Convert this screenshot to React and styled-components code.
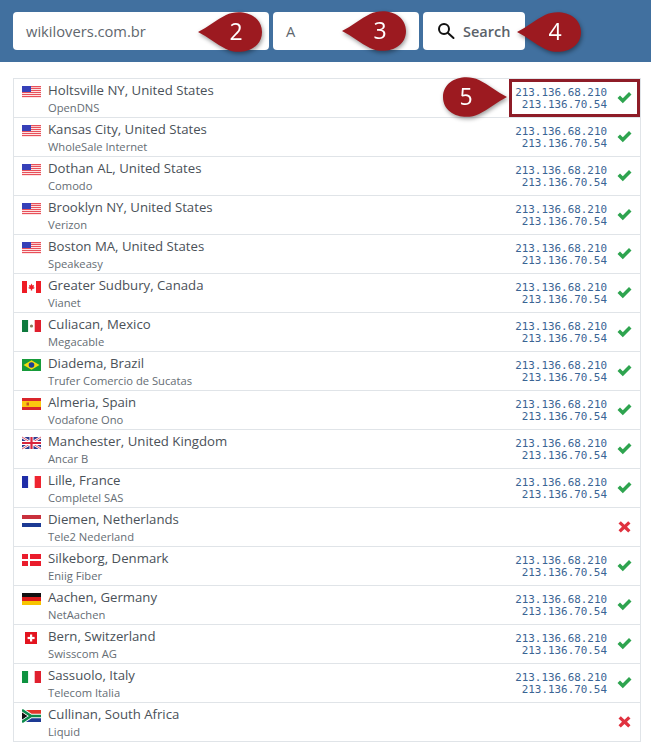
import React from 'react'
import styled, { createGlobalStyle } from 'styled-components'

const GlobalStyle = createGlobalStyle`
  html, body { margin: 0; padding: 0; background: #fff; }
  body { font-family: "Open Sans", "Noto Sans", sans-serif; overflow: hidden; }
`

const Page = styled.div`
  position: relative;
  width: 651px;
  height: 742px;
  overflow: hidden;
`

const Header = styled.div`
  display: flex;
  gap: 4px;
  height: 62px;
  box-sizing: border-box;
  padding: 12px 13px;
  background: #41709f;
`

const Field = styled.div`
  display: flex;
  align-items: center;
  box-sizing: border-box;
  width: ${p => p.$width}px;
  height: 38px;
  padding-left: 13px;
  background: #fff;
  border-radius: 4px;
  color: #5f676e;
  font-size: 14.7px;
`

const SearchButton = styled.div`
  display: flex;
  align-items: center;
  gap: 8px;
  box-sizing: border-box;
  width: 102px;
  height: 38px;
  padding-left: 14px;
  background: #fff;
  border-radius: 4px;
  color: #5b6269;
  font-size: 14.5px;
  font-weight: 600;
`

const List = styled.div`
  margin: 16px 10px 0 13px;
  border: 1px solid #e0e4e8;
  border-bottom: none;
`

const Row = styled.div`
  display: flex;
  align-items: center;
  box-sizing: border-box;
  height: 39px;
  padding: 0 8px 0 8px;
  border-bottom: 1px solid #e0e4e8;
`

const FlagBox = styled.svg`
  flex: none;
  width: 19px;
  height: 14px;
  margin-right: 7px;
  margin-top: -12px;
`

const Place = styled.div`
  flex: 1;
  min-width: 0;
`

const City = styled.div`
  color: #4a5158;
  font-size: 13.2px;
  line-height: 18px;
  margin-top: 1px;
`

const Isp = styled.div`
  color: #656d74;
  font-size: 11.2px;
  line-height: 17px;
`

const Ips = styled.div`
  color: #3a6494;
  font-family: "DejaVu Sans Mono", monospace;
  font-size: 10.9px;
  line-height: 12px;
  text-align: right;
  margin-right: 10px;
  margin-top: 1px;
`

const Status = styled.svg`
  flex: none;
  width: 15px;
  height: 13px;
  margin-top: -1px;
`

const Highlight = styled.div`
  position: absolute;
  left: 509px;
  top: 79px;
  width: 131px;
  height: 38px;
  box-sizing: border-box;
  border: 3px solid #8e1c27;
`

const Callout = styled.div`
  position: absolute;
  left: ${p => p.$x}px;
  top: ${p => p.$y}px;
  width: 64px;
  height: 42px;
  filter: drop-shadow(1px 2px 2px rgba(0, 0, 0, 0.4));
  svg { display: block; width: 64px; height: 42px; }
`

const CalloutNumber = styled.span`
  position: absolute;
  top: 0;
  ${p => (p.$flip ? 'left: 11px;' : 'right: 14px;')}
  width: 24px;
  line-height: 40px;
  text-align: center;
  color: #fff;
  font-family: "Open Sans", sans-serif;
  font-size: 23px;
`

const usStripes = [0, 2, 4, 6, 8, 10].map(y => <rect key={y} x="0" y={y + 1} width="19" height="1" fill="#e8505a" />)

const flags = {
  us: (
    <>
      <rect y="1" width="19" height="12" fill="#fde3e3" />
      {usStripes}
      <rect y="1" width="19" height="1.2" fill="#e8505a" />
      <rect y="1" width="9" height="6" fill="#3640b8" />
    </>
  ),
  ca: (
    <>
      <rect y="1" width="19" height="12" fill="#fff" />
      <rect y="1" width="5" height="12" fill="#ee1c25" />
      <rect x="14" y="1" width="5" height="12" fill="#ee1c25" />
      <path d="M9.5 3.5l1 2 1.5-.5-.5 2.500 1-.3-.3 1.300-2 .5V10.500h-1.400V9l-2-.5-.3-1.300 1 .3L7 5l1.500.5z" fill="#ee1c25" />
    </>
  ),
  mx: (
    <>
      <rect y="1" width="6.300" height="12" fill="#0e7a3e" />
      <rect x="6.300" y="1" width="6.400" height="12" fill="#fff" />
      <rect x="12.700" y="1" width="6.300" height="12" fill="#e01f2d" />
      <circle cx="9.500" cy="7" r="1.600" fill="#8a7a5a" />
    </>
  ),
  br: (
    <>
      <rect y="1" width="19" height="12" fill="#169b3a" />
      <path d="M9.500 2.200L17.500 7 9.500 11.800 1.500 7z" fill="#f5dd10" />
      <circle cx="9.500" cy="7" r="2.800" fill="#1f3f94" />
    </>
  ),
  es: (
    <>
      <rect y="1" width="19" height="12" fill="#d9252b" />
      <rect y="4" width="19" height="6" fill="#fbc70f" />
      <rect x="4.500" y="5.500" width="2.500" height="3" fill="#c9541f" />
    </>
  ),
  gb: (
    <>
      <rect y="1" width="19" height="12" fill="#2f3a8f" />
      <path d="M0 1l19 12M19 1L0 13" stroke="#fff" strokeWidth="2.400" />
      <path d="M0 1l19 12M19 1L0 13" stroke="#d8324a" strokeWidth=".8" />
      <path d="M9.500 1v12M0 7h19" stroke="#fff" strokeWidth="4" />
      <path d="M9.500 1v12M0 7h19" stroke="#d8243c" strokeWidth="2.200" />
    </>
  ),
  fr: (
    <>
      <rect y="1" width="6.300" height="12" fill="#1f2da8" />
      <rect x="6.300" y="1" width="6.400" height="12" fill="#fff" />
      <rect x="12.700" y="1" width="6.300" height="12" fill="#ee2430" />
    </>
  ),
  nl: (
    <>
      <rect y="1" width="19" height="4" fill="#c9303c" />
      <rect y="5" width="19" height="4" fill="#fff" />
      <rect y="9" width="19" height="4" fill="#1c3a94" />
    </>
  ),
  dk: (
    <>
      <rect y="1" width="19" height="12" fill="#ea1c2c" />
      <rect x="6" y="1" width="2" height="12" fill="#fff" />
      <rect y="6" width="19" height="2" fill="#fff" />
    </>
  ),
  de: (
    <>
      <rect y="1" width="19" height="4" fill="#111" />
      <rect y="5" width="19" height="4" fill="#dd1c1c" />
      <rect y="9" width="19" height="4" fill="#f7c400" />
    </>
  ),
  ch: (
    <>
      <rect x="3" y="1" width="12" height="12" fill="#e3141f" />
      <rect x="8" y="3.500" width="2.200" height="7" fill="#fff" />
      <rect x="5.600" y="5.900" width="7" height="2.200" fill="#fff" />
    </>
  ),
  it: (
    <>
      <rect y="1" width="6.300" height="12" fill="#0e9240" />
      <rect x="6.300" y="1" width="6.400" height="12" fill="#fff" />
      <rect x="12.700" y="1" width="6.300" height="12" fill="#e0202e" />
    </>
  ),
  za: (
    <>
      <rect y="1" width="19" height="6" fill="#e0352b" />
      <rect y="7" width="19" height="6" fill="#1d3a94" />
      <path d="M0 1l9 6-9 6M9 7h10" stroke="#fff" strokeWidth="4.400" fill="none" />
      <path d="M0 1l9 6-9 6M9 7h10" stroke="#0d8a4a" strokeWidth="2.600" fill="none" />
      <path d="M0 3.500L5.200 7 0 10.500z" fill="#111" />
    </>
  )
}

const rows = [
  ['us', 'Holtsville NY, United States', 'OpenDNS', true],
  ['us', 'Kansas City, United States', 'WholeSale Internet', true],
  ['us', 'Dothan AL, United States', 'Comodo', true],
  ['us', 'Brooklyn NY, United States', 'Verizon', true],
  ['us', 'Boston MA, United States', 'Speakeasy', true],
  ['ca', 'Greater Sudbury, Canada', 'Vianet', true],
  ['mx', 'Culiacan, Mexico', 'Megacable', true],
  ['br', 'Diadema, Brazil', 'Trufer Comercio de Sucatas', true],
  ['es', 'Almeria, Spain', 'Vodafone Ono', true],
  ['gb', 'Manchester, United Kingdom', 'Ancar B', true],
  ['fr', 'Lille, France', 'Completel SAS', true],
  ['nl', 'Diemen, Netherlands', 'Tele2 Nederland', false],
  ['dk', 'Silkeborg, Denmark', 'Eniig Fiber', true],
  ['de', 'Aachen, Germany', 'NetAachen', true],
  ['ch', 'Bern, Switzerland', 'Swisscom AG', true],
  ['it', 'Sassuolo, Italy', 'Telecom Italia', true],
  ['za', 'Cullinan, South Africa', 'Liquid', false]
]

function StatusIcon({ ok }) {
  return (
    <Status viewBox="0 0 15 13">
      {ok ? (
        <path d="M.5 7L3 4.500 5.800 7.300 12 1 14.500 3.500 5.800 12.200z" fill="#2ea44f" />
      ) : (
        <path d="M3.800 1.200L7.500 4.700 11.200 1.200 13.500 3.500 10 6.800 13.500 10.200 11.200 12.500 7.500 9 3.800 12.500 1.500 10.200 5 6.800 1.500 3.500z" fill="#e0323f" />
      )}
    </Status>
  )
}

function Marker({ n, x, y, flip }) {
  // teardrop pointing left, or pointing right when flipped
  return (
    <Callout $x={x} $y={y}>
      <svg viewBox="0 0 64 42">
        <path
          d={flip
            ? 'M64 21C54 16 46 9 36 4 22-3 0 3 0 21s22 24 36 17C46 33 54 26 64 21z'
            : 'M0 21C10 16 18 9 28 4 42-3 64 3 64 21S42 45 28 38C18 33 10 26 0 21z'}
          fill="#9c1a20"
        />
      </svg>
      <CalloutNumber $flip={flip}>{n}</CalloutNumber>
    </Callout>
  )
}

export default function App() {
  return (
    <Page>
      <GlobalStyle />
      <Header>
        <Field $width={256}>wikilovers.com.br</Field>
        <Field $width={146}>A</Field>
        <SearchButton>
          <svg width="18" height="18" viewBox="0 0 18 18" fill="none" stroke="#111" strokeWidth="2">
            <circle cx="7" cy="7" r="5" />
            <path d="M11 11l5.500 5" strokeLinecap="round" />
          </svg>
          Search
        </SearchButton>
      </Header>
      <List>
        {rows.map(([flag, city, isp, ok]) => (
          <Row key={city}>
            <FlagBox viewBox="0 0 19 14">{flags[flag]}</FlagBox>
            <Place>
              <City>{city}</City>
              <Isp>{isp}</Isp>
            </Place>
            {ok && (
              <Ips>
                213.136.68.210
                <br />
                213.136.70.54
              </Ips>
            )}
            <StatusIcon ok={ok} />
          </Row>
        ))}
      </List>
      <Highlight />
      <Marker n="2" x={198} y={11} />
      <Marker n="3" x={342} y={10} />
      <Marker n="4" x={517} y={11} />
      <Marker n="5" x={443} y={76} flip />
    </Page>
  )
}
